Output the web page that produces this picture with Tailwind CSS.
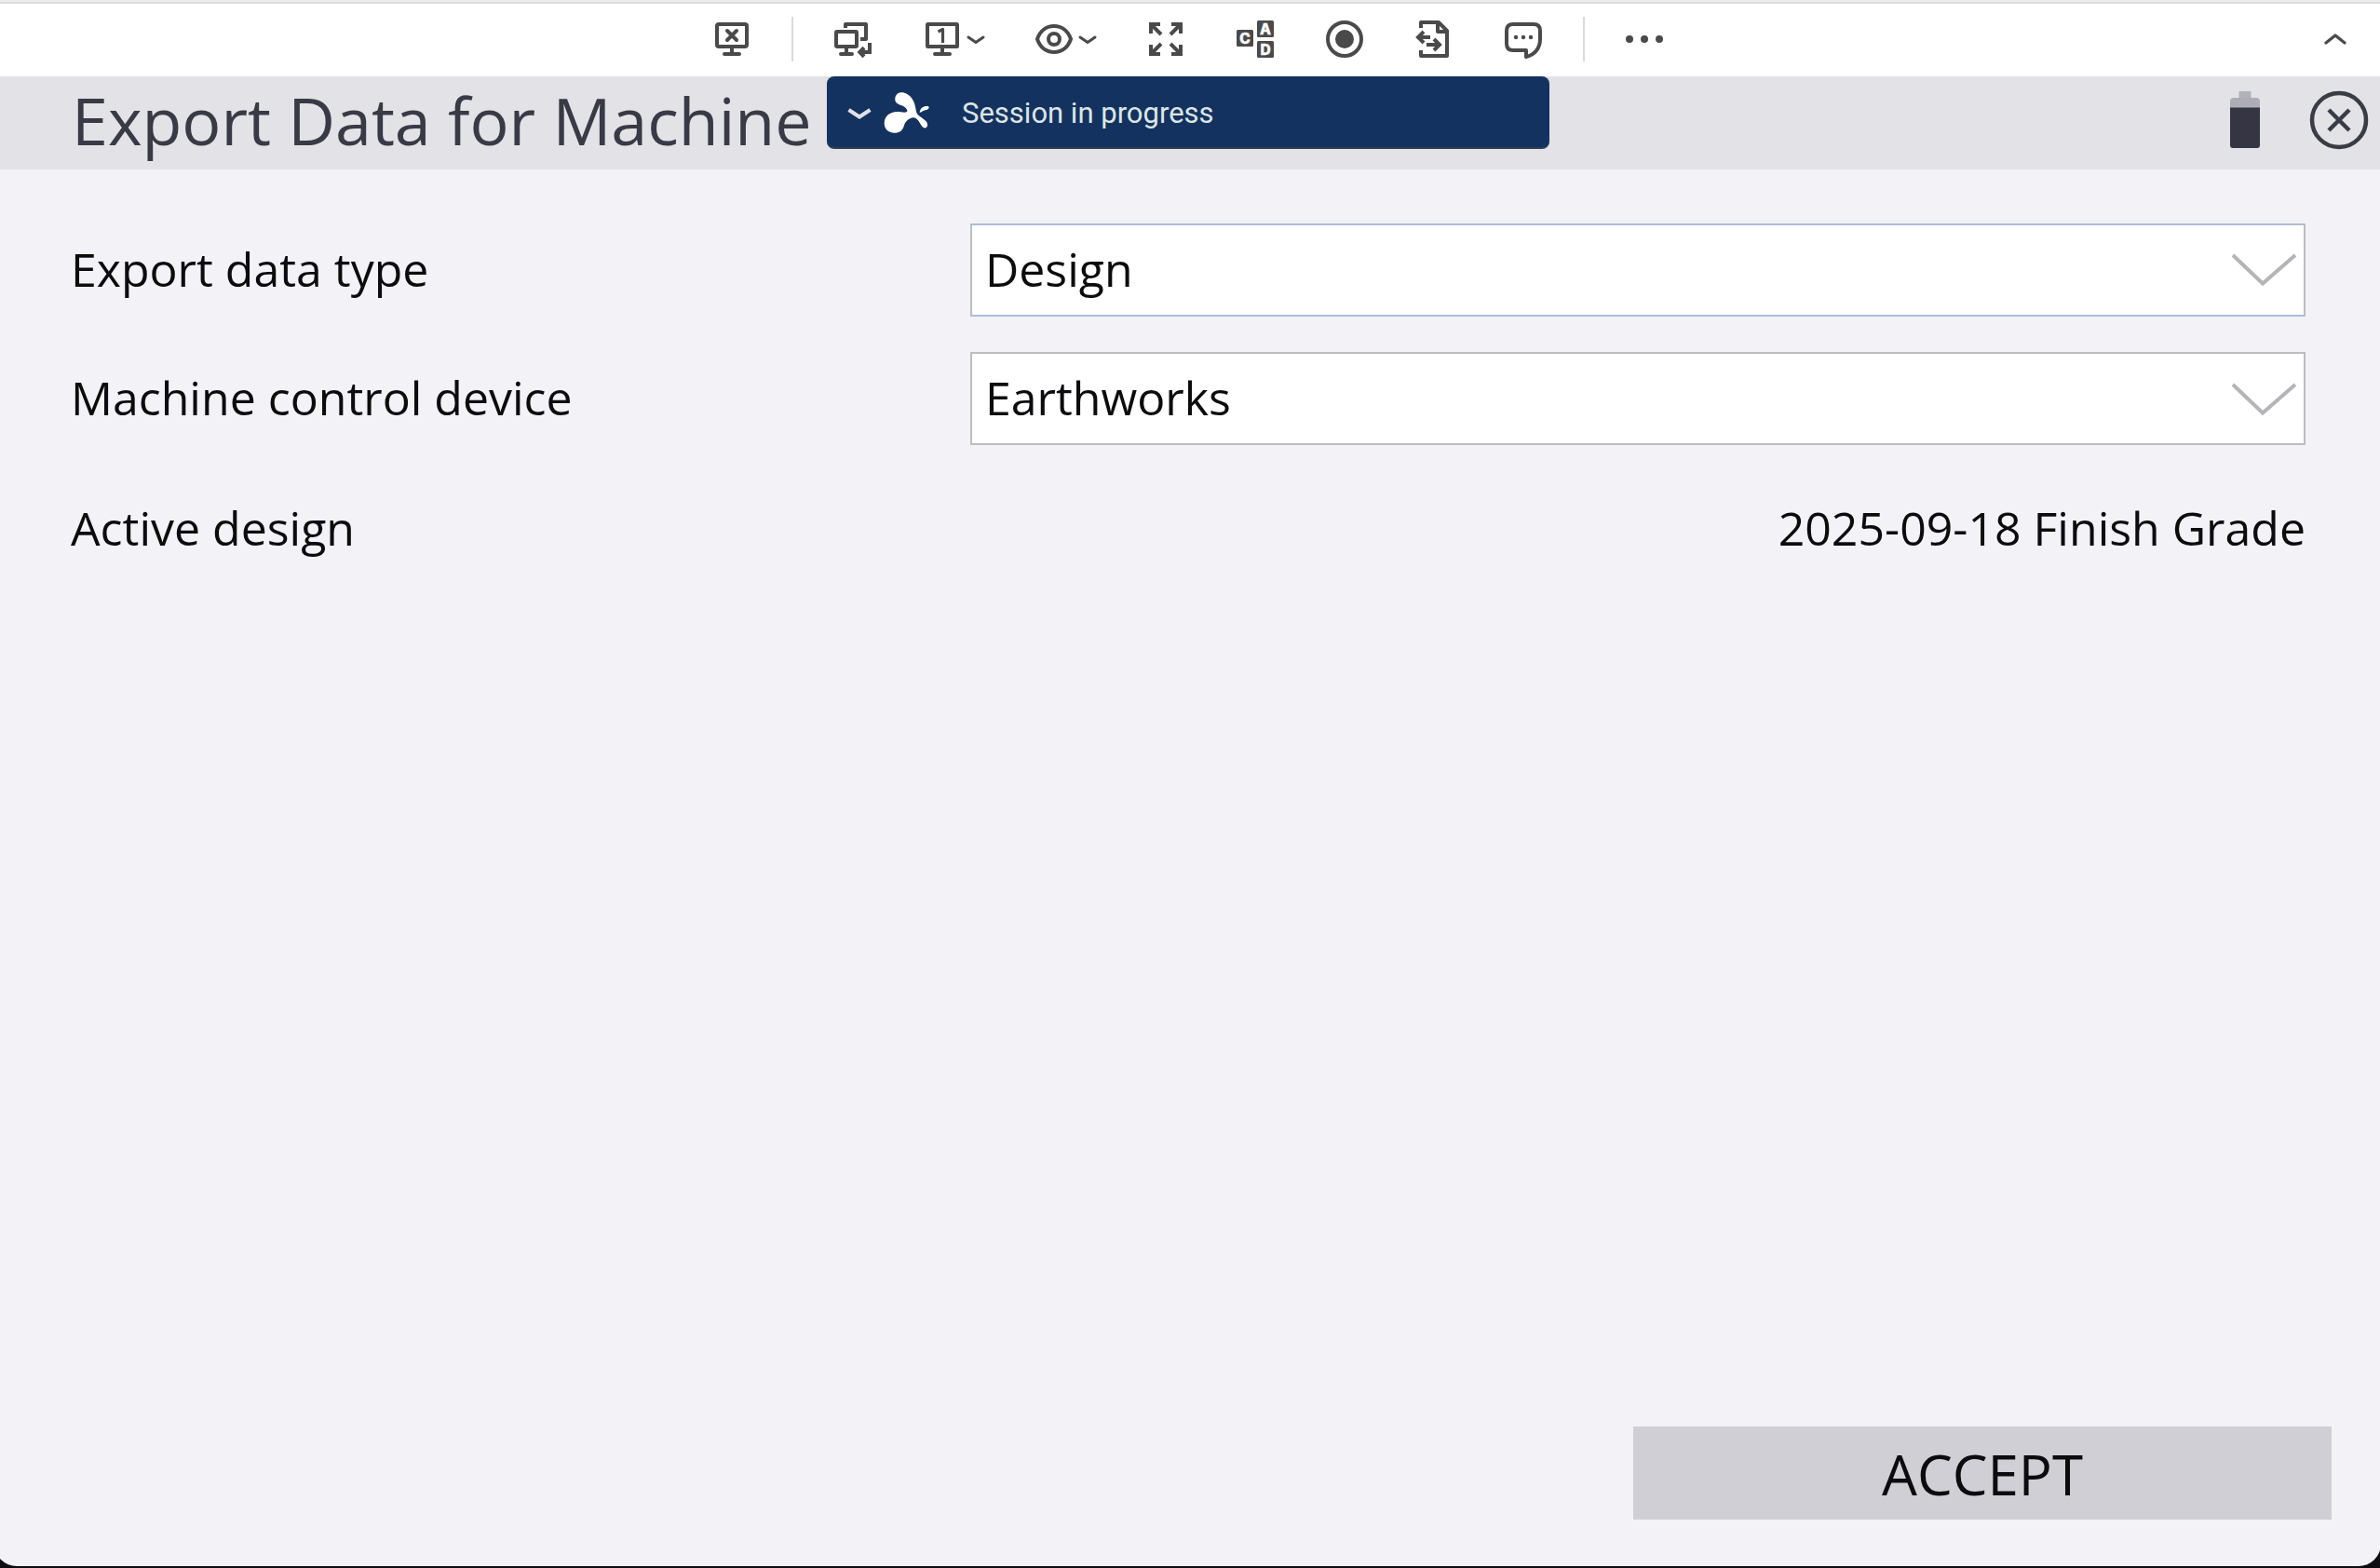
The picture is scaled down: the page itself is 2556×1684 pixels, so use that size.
<!DOCTYPE html>
<html lang="en">
<head>
<meta charset="utf-8">
<title>Export Data for Machine</title>
<script src="https://cdn.jsdelivr.net/npm/@tailwindcss/browser@4"></script>
</head>
<body class="w-[2556px] h-[1684px] overflow-hidden bg-[#0d0d12] font-['Open_Sans',sans-serif] text-[#0c0c0e]">
<div class="-ml-1.5 -mr-px pl-1.5 pr-px h-[1682px] flex flex-col bg-[#f2f2f7] rounded-b-3xl overflow-hidden">

  <!-- Remote session toolbar -->
  <div class="h-[82px] shrink-0 bg-white flex flex-col text-[#4a4a4a]">
    <div class="h-1 shrink-0 bg-[#ececec] border-b-2 border-[#dcdcdc]"></div>
    <div class="flex-1 flex items-center pb-0.5 pl-[768px] pr-9">
      <svg class="w-9 h-12 shrink-0" viewBox="768 18 36 48" fill="none" stroke="currentColor" stroke-width="4" stroke-linecap="round">
        <rect x="770" y="26" width="32" height="24" rx="2"/><path d="M786 52v5M778 58h16" /><path d="M781 33l10 10M791 33l-10 10"/>
      </svg>
      <div class="ml-[46px] w-0.5 h-12 bg-[#dadada]"></div>
      <svg class="ml-11 w-10 h-12 shrink-0" viewBox="896 18 40 48" fill="none" stroke="currentColor" stroke-width="4">
        <rect x="898" y="34" width="22" height="16" rx="1"/><path d="M909 52v5"/><path d="M903 58h12" stroke-linecap="round"/>
        <path d="M908 30v-4h22v16h-6" stroke-linejoin="round"/>
        <path d="M934 46v10h-8"/><path d="M920.500 56l6-6.300 3 3-3 3.300 3 3.300-3 3z" fill="currentColor" stroke="none"/>
      </svg>
      <svg class="ml-[58px] w-9 h-12 shrink-0" viewBox="994 18 36 48" fill="none" stroke="currentColor" stroke-width="4">
        <rect x="996" y="26" width="32" height="24" rx=".5"/><path d="M1012 52v5"/><path d="M1004 58h16" stroke-linecap="round"/>
        <path d="M1007.500 34l5-2.500V46" stroke-width="3.200" stroke-linejoin="round"/>
      </svg>
      <svg class="ml-2 w-5 h-12 shrink-0" viewBox="1038 18 20 48" fill="none" stroke="currentColor" stroke-width="3" stroke-linecap="round" stroke-linejoin="round"><path d="M1040 40l8 5.500 8-5.500"/></svg>
      <svg class="ml-[54px] w-10 h-12 shrink-0" viewBox="1112 18 40 48" fill="none" stroke="currentColor" stroke-width="4">
        <path d="M1114 42C1117 33 1124 28 1132 28S1147 33 1150 42C1147 51 1140 56 1132 56S1117 51 1114 42z" stroke-linejoin="round"/><circle cx="1132" cy="42" r="6"/>
      </svg>
      <svg class="ml-1.5 w-5 h-12 shrink-0" viewBox="1158 18 20 48" fill="none" stroke="currentColor" stroke-width="3" stroke-linecap="round" stroke-linejoin="round"><path d="M1160 40l8 5.500 8-5.500"/></svg>
      <svg class="ml-14 w-9 h-12 shrink-0" viewBox="1234 18 36 48" fill="none" stroke="currentColor" stroke-width="4">
        <path d="M1236 36V26h10M1258 26h10v10M1268 48v10h-10M1246 58h-10V48M1236 26l11 11M1268 26l-11 11M1268 58l-11-11M1236 58l11-11"/>
      </svg>
      <svg class="ml-[58px] w-10 h-12 shrink-0" viewBox="1328 18 40 48">
        <g fill="currentColor"><rect x="1328" y="32" width="18" height="18" rx="1.500"/><rect x="1350" y="22" width="18" height="18" rx="1.500"/><rect x="1350" y="44" width="18" height="18" rx="1.500"/></g>
        <g class="font-['Inter',sans-serif]" fill="#fff" stroke="#fff" stroke-width=".4" font-size="15.500" font-weight="800" text-anchor="middle"><text x="1337" y="46.500">C</text><text x="1359" y="36.500">A</text><text x="1359" y="58.500">D</text></g>
      </svg>
      <svg class="ml-14 w-10 h-12 shrink-0" viewBox="1424 18 40 48" fill="none" stroke="currentColor" stroke-width="4">
        <circle cx="1444" cy="42" r="18"/><circle cx="1444" cy="42" r="10" fill="currentColor" stroke="none"/>
      </svg>
      <svg class="ml-14 w-9 h-12 shrink-0" viewBox="1520 18 36 48" fill="none" stroke="currentColor" stroke-width="4" stroke-linejoin="round">
        <path d="M1526 30v-6h19l9 9v27h-28v-6"/><path d="M1544 24v10h10"/>
        <path d="M1536 40h-13M1529 34l-6 6 6 6M1532 48h13M1540 42l6 6-6 6" stroke-linejoin="miter"/>
      </svg>
      <svg class="ml-[60px] w-10 h-12 shrink-0" viewBox="1616 18 40 48" fill="none" stroke="currentColor" stroke-width="4" stroke-linejoin="round">
        <path d="M1625 26h22q7 0 7 7v9c0 10-6 17-15 19v-7h-14q-7 0-7-7V33q0-7 7-7z"/>
        <g fill="currentColor" stroke="none"><circle cx="1628" cy="40" r="2.200"/><circle cx="1636" cy="40" r="2.200"/><circle cx="1644" cy="40" r="2.200"/></g>
      </svg>
      <div class="ml-11 w-0.5 h-12 bg-[#dadada]"></div>
      <div class="ml-11 flex gap-2">
        <span class="size-2 rounded-full bg-current"></span><span class="size-2 rounded-full bg-current"></span><span class="size-2 rounded-full bg-current"></span>
      </div>
      <svg class="ml-auto w-6 h-12 shrink-0" viewBox="2496 18 24 48" fill="none" stroke="currentColor" stroke-width="3.200" stroke-linecap="round" stroke-linejoin="round"><path d="M2498 46l10-8 10 8"/></svg>
    </div>
  </div>

  <!-- Title bar -->
  <div class="h-[100px] shrink-0 bg-[#e2e2e7] flex items-start">
    <h1 class="w-[888px] pl-[77px] h-[94px] leading-[94px] text-[70px] text-[#393a45] whitespace-nowrap">Export Data for Machine</h1>
    <div class="w-[776px] h-[78px] bg-[#14325f] border-b-2 border-[#2b4059] rounded-lg flex items-center shrink-0">
      <svg class="ml-[22px] mt-1 w-[26px] h-4 shrink-0" viewBox="0 0 26 16" fill="none" stroke="#dfe3e8" stroke-width="4"><path d="M1.500 4L13 11.500 24.500 4"/></svg>
      <svg class="ml-3 w-[52px] h-[47px] shrink-0" viewBox="235 80 156 141" fill="#fff">
        <path d="M240 186C241 162 258 150 281 149C293 149 304 153 312 150C318 147 311 135 296 129C282 125 273 119 275 105C277 90 290 84 305 88C326 94 339 116 342 143C344 157 349 160 363 170C373 177 381 184 379 194C377 204 366 204 360 194C353 182 345 168 334 168C319 170 308 180 304 193C299 210 289 217 272 217C253 217 240 205 240 186z"/>
        <path d="M354 152C355 138 366 130 380 131C387 133 384 141 376 143C367 145 362 149 354 152z"/>
      </svg>
      <span class="ml-[33px] pt-0.5 text-[31px] leading-none text-[#dde6e4] font-['Roboto',sans-serif] whitespace-nowrap">Session in progress</span>
    </div>
    <div class="ml-auto flex items-center pr-3 pt-[15px]">
      <svg class="mb-0.5 w-8 h-[61px]" viewBox="0 0 32 61"><rect x="9.500" width="13" height="12" fill="#b2b2bb"/><path d="M0 18V11q0-4 4-4h24q4 0 4 4v7z" fill="#aeadb7"/><path d="M0 17.500h32V58q0 3-3 3H3q-3 0-3-3z" fill="#353543"/></svg>
      <svg class="ml-[53px] w-16 h-16" viewBox="0 0 64 64" fill="none" stroke="#3b3b45" stroke-width="4.500"><circle cx="32" cy="32" r="29"/><path d="M21 21l22 22M43 21l-22 22"/></svg>
    </div>
  </div>

  <!-- Form -->
  <main class="pt-[58px] pl-[76px] pr-20 flex flex-col gap-[38px] text-[50px]">
    <div class="h-[100px] flex items-center justify-between">
      <span class="pb-0.5">Export data type</span>
      <div class="w-[1434px] h-[100px] bg-white border-2 border-x-[#bcbcc1] border-t-[#b0bdce] border-b-[#a9bedb] flex items-center justify-between pl-3.5 pr-[7px]">
        <span class="pb-0.5">Design</span>
        <svg class="mb-0.5 w-[72px] h-10" viewBox="0 0 72 40" fill="none" stroke="#b5b5b8" stroke-width="4"><path d="M3 5L35 35.500 70 5"/></svg>
      </div>
    </div>
    <div class="h-[100px] flex items-center justify-between">
      <span class="pb-0.5">Machine control device</span>
      <div class="w-[1434px] h-[100px] bg-white border-2 border-[#bcbcc1] flex items-center justify-between pl-3.5 pr-[7px]">
        <span class="pb-0.5">Earthworks</span>
        <svg class="w-[72px] h-10" viewBox="0 0 72 40" fill="none" stroke="#b5b5b8" stroke-width="4"><path d="M3 5L35 35.500 70 5"/></svg>
      </div>
    </div>
    <div class="h-[100px] pt-0.5 flex items-center justify-between">
      <span>Active design</span>
      <span>2025-09-18 Finish Grade</span>
    </div>
  </main>

  <!-- Actions -->
  <footer class="mt-auto flex justify-end pr-[52px] pb-[50px]">
    <button class="w-[750px] h-[100px] pt-0.5 bg-[#d0cfd5] text-[60px] leading-none">ACCEPT</button>
  </footer>
</div>
</body>
</html>
